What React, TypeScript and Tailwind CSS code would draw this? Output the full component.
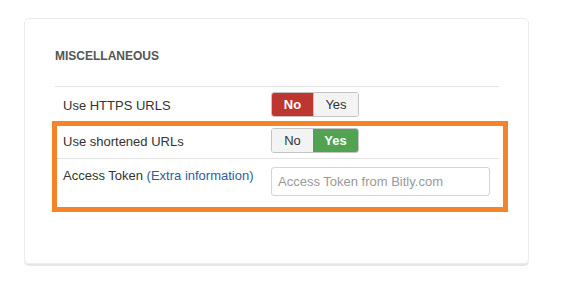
import React from 'react';

const Toggle: React.FC<{ value: boolean }> = ({ value }) => {
  return (
    <div className="flex h-[25px] w-[88px] rounded-[3px] border border-[#c4c4c4] overflow-hidden text-[13px] leading-none">
      <span
        className={
          value
            ? 'flex w-[41px] items-center justify-center bg-[#f3f3f3] text-[#333]'
            : 'flex w-[41px] items-center justify-center bg-[#bd362f] text-white font-bold'
        }
      >
        No
      </span>
      <span
        className={
          value
            ? 'flex flex-1 items-center justify-center bg-[#51a351] text-white font-bold'
            : 'flex flex-1 items-center justify-center bg-[#f3f3f3] text-[#333] border-l border-[#c4c4c4]'
        }
      >
        Yes
      </span>
    </div>
  );
};

const App: React.FC = () => {
  return (
    <div className="min-h-screen bg-white pt-[18px] pl-[24px] font-['Liberation_Sans',Arial,sans-serif] text-[13px] text-[#333]">
      <div className="w-[505px] h-[246px] rounded-[5px] border border-[#ececec] shadow-[0_2px_0_#e6e6e6] pl-[30px] pr-[29px] pt-[29px]">
        <h3 className="text-[12px] leading-4 font-bold text-[#555]">MISCELLANEOUS</h3>

        <div className="mt-[22px] border-t border-[#e3e3e3]">
          {/* Row 1 */}
          <div className="flex h-[34px] items-start pt-[5px] pl-[8px]">
            <label className="w-[208px] pt-[4px]">Use HTTPS URLS</label>
            <Toggle value={false} />
          </div>

          {/* highlighted block */}
          <div className="ml-[-3px] mr-[-9px] border-[5px] border-[#f5832a]">
            <div className="flex h-[33px] items-start pt-[2px] pl-[6px] mr-[4px] border-b border-[#e3e3e3]">
              <label className="w-[208px] pt-[4px]">Use shortened URLs</label>
              <Toggle value={true} />
            </div>
            <div className="flex h-[48px] items-start pt-[8px] pl-[6px]">
              <label className="w-[208px] -mt-[1px]">
                Access Token <span className="text-[#2f5d9c]">(Extra information)</span>
              </label>
              <input
                className="h-[29px] w-[219px] rounded-[3px] border border-[#d4d4d4] px-[6px] text-[13px] placeholder:text-[#999] outline-none"
                placeholder="Access Token from Bitly.com"
              />
            </div>
          </div>
        </div>
      </div>
    </div>
  );
};

export default App;
